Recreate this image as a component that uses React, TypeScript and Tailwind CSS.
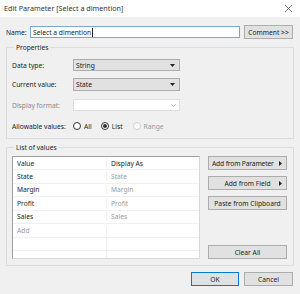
import React from 'react';

const rows = [
  { value: 'State', display: 'State' },
  { value: 'Margin', display: 'Margin' },
  { value: 'Profit', display: 'Profit' },
  { value: 'Sales', display: 'Sales' },
];

const Caret = () => (
  <svg width="5" height="3" viewBox="0 0 5 3" className="shrink-0">
    <path d="M0 0h5L2.5 3z" fill="#222" />
  </svg>
);

const CaretRight = () => (
  <svg width="3" height="5" viewBox="0 0 3 5" className="shrink-0">
    <path d="M0 0v5l3-2.5z" fill="#222" />
  </svg>
);

const Radio = ({ checked, disabled }: { checked?: boolean; disabled?: boolean }) => (
  <span
    className={`flex h-[8px] w-[8px] items-center justify-center rounded-full border bg-white ${
      disabled ? 'border-[#cfcfcf]' : 'border-[#333]'
    }`}
  >
    {checked && <span className="h-[4px] w-[4px] rounded-full bg-[#333]" />}
  </span>
);

const Btn = ({ children, className = '' }: { children: React.ReactNode; className?: string }) => (
  <div
    className={`flex h-[14px] items-center justify-center whitespace-nowrap border border-[#adadad] bg-[#e1e1e1] text-[#222] ${className}`}
  >
    {children}
  </div>
);

const App = () => {
  return (
    <div className="flex h-[294px] w-[300px] flex-col bg-[#f0f0f0] text-[6.7px] leading-[9px] text-[#222] font-['Noto_Sans',sans-serif]">
      {/* title bar */}
      <div className="flex h-[17px] items-center justify-between bg-white pl-[4px] pr-[8px] text-[7.2px] text-[#333]">
        <span>Edit Parameter [Select a dimention]</span>
        <svg width="7" height="7" viewBox="0 0 7 7">
          <path d="M0 0l7 7M7 0L0 7" stroke="#555" strokeWidth="0.8" />
        </svg>
      </div>

      {/* name */}
      <div className="mt-[8px] flex h-[14px] items-center pl-[6px] pr-[7px]">
        <span className="w-[24px]">Name:</span>
        <div className="flex h-[12px] w-[210px] items-center border border-[#7aa7d9] bg-white pl-[2px]">
          Select a dimention<span className="ml-[0.5px] h-[9px] w-px bg-[#222]" />
        </div>
        <Btn className="ml-auto w-[49px]">Comment &gt;&gt;</Btn>
      </div>

      {/* properties */}
      <fieldset className="mx-[6px] mt-[4px] h-[96px] border border-[#dcdcdc] px-[5px]">
        <legend className="ml-[2px] px-[2px] text-[#222]">Properties</legend>
        <div className="mt-[7px] flex h-[12px] items-center">
          <span className="w-[61px]">Data type:</span>
          <div className="flex h-[12px] w-[107px] items-center justify-between border border-[#adadad] bg-[#e1e1e1] pl-[2px] pr-[4px]">
            String <Caret />
          </div>
        </div>
        <div className="mt-[7px] flex h-[13px] items-center">
          <span className="w-[61px]">Current value:</span>
          <div className="flex h-[13px] w-[107px] items-center justify-between border border-[#adadad] bg-[#e1e1e1] pl-[2px] pr-[4px]">
            State <Caret />
          </div>
        </div>
        <div className="mt-[8px] flex h-[12px] items-center">
          <span className="w-[61px] text-[#8a8a8a]">Display format:</span>
          <div className="flex h-[12px] w-[107px] items-center justify-end border border-[#dedede] bg-white pr-[3px]">
            <svg width="5" height="3" viewBox="0 0 5 3">
              <path d="M0 0l2.5 2.5L5 0" fill="none" stroke="#a0a0a0" strokeWidth="0.7" />
            </svg>
          </div>
        </div>
        <div className="mt-[10px] flex h-[10px] items-center">
          <span className="w-[61px]">Allowable values:</span>
          <Radio />
          <span className="ml-[3px]">All</span>
          <span className="ml-[9px]" />
          <Radio checked />
          <span className="ml-[3px]">List</span>
          <span className="ml-[10px]" />
          <Radio disabled />
          <span className="ml-[3px] text-[#9a9a9a]">Range</span>
        </div>
      </fieldset>

      {/* list of values */}
      <fieldset className="mx-[6px] mt-[4px] h-[123px] border border-[#dcdcdc] px-[5px]">
        <legend className="ml-[2px] px-[2px]">List of values</legend>
        <div className="mt-[4px] flex">
          <div className="flex h-[103px] w-[188px] flex-col border border-t-[#a0a0a0] border-l-[#a0a0a0] border-r-[#d8d8d8] border-b-[#d8d8d8] bg-white">
            <div className="flex h-[13px] items-center border-b border-[#f0f0f0]">
              <span className="w-[94px] border-r border-[#f0f0f0] pl-[4px]">Value</span>
              <span className="pl-[4px]">Display As</span>
            </div>
            {rows.map((r) => (
              <div key={r.value} className="flex h-[13.5px] items-center border-b border-[#f0f0f0]">
                <span className="w-[94px] border-r border-[#f0f0f0] pl-[4px]">{r.value}</span>
                <span className="pl-[4px] text-[#9a9a9a]">{r.display}</span>
              </div>
            ))}
            <div className="flex h-[13.5px] items-center border-b border-[#f0f0f0]">
              <span className="w-[94px] border-r border-[#f0f0f0] pl-[4px] text-[#9a9a9a]">Add</span>
            </div>
            <div className="flex h-[13.5px] border-b border-[#f0f0f0]">
              <span className="w-[94px] border-r border-[#f0f0f0]" />
            </div>
            <div className="flex flex-1">
              <span className="w-[94px] border-r border-[#f0f0f0]" />
            </div>
          </div>
          <div className="ml-[8px] flex w-[79px] flex-col">
            <Btn className="relative justify-start pl-[3px] tracking-[-0.15px]">
              Add from Parameter
              <span className="absolute right-[4px] top-[4px]">
                <CaretRight />
              </span>
            </Btn>
            <Btn className="relative mt-[6px]">
              Add from Field
              <span className="absolute right-[4px] top-[4px]">
                <CaretRight />
              </span>
            </Btn>
            <Btn className="mt-[6px]">Paste from Clipboard</Btn>
            <Btn className="mt-auto">Clear All</Btn>
          </div>
        </div>
      </fieldset>

      {/* footer */}
      <div className="mt-[6px] flex justify-end pr-[7px]">
        <div className="flex h-[14px] w-[48px] items-center justify-center border border-[#0078d7] bg-[#e1e1e1]">OK</div>
        <Btn className="ml-[5px] w-[49px]">Cancel</Btn>
      </div>
    </div>
  );
};

export default App;
